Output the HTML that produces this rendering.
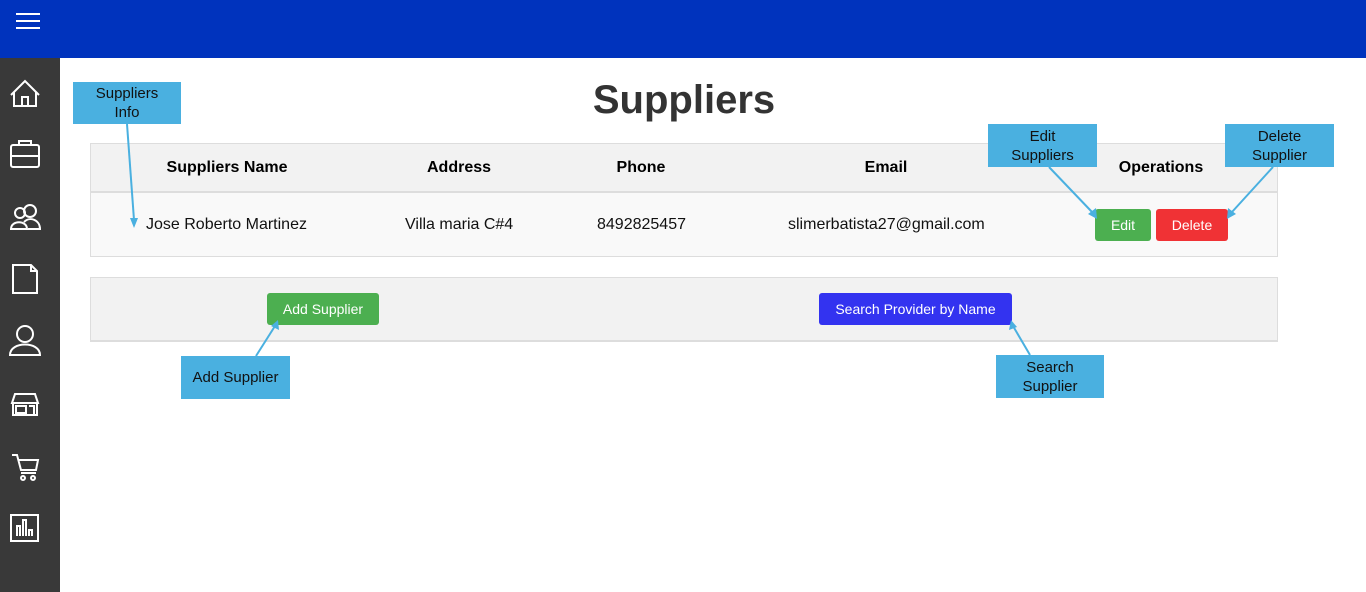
<!DOCTYPE html>
<html><head><meta charset="utf-8"><style>
*{margin:0;padding:0;box-sizing:border-box}
body{width:1366px;height:592px;position:relative;overflow:hidden;background:#fff;font-family:"Liberation Sans",Arial,sans-serif}
.a{position:absolute}
.top{left:0;top:0;width:1366px;height:58px;background:#0033bd}
.side{left:0;top:58px;width:60px;height:534px;background:#393939}
.th{font-weight:bold;font-size:16px;color:#000;text-align:center;transform:translateX(-50%);top:159px}
.td{font-size:16px;color:#111;top:216px}
.btn{color:#fff;font-size:14px;display:flex;align-items:center;justify-content:center;border-radius:3px}
.call{background:#4ab0e0;color:#111;font-size:15px;text-align:center;display:flex;align-items:center;justify-content:center;line-height:19px}
</style></head><body>
<div class="a top"></div>
<svg class="a" style="left:14px;top:11px" width="28" height="20"><g stroke="#fff" stroke-width="2"><line x1="2" y1="3" x2="26" y2="3"/><line x1="2" y1="10" x2="26" y2="10"/><line x1="2" y1="17" x2="26" y2="17"/></g></svg>
<div class="a side"></div>
<svg class="a" style="left:0;top:58px" width="60" height="534" fill="none" stroke="#fff" stroke-width="2">
<path d="M11 37 L25 23 L39 37 M14 34 V48 H36 V34 M22 48 V39 H28 V48"/>
<rect x="11" y="87" width="28" height="22" rx="2"/><path d="M19 87 V83 H31 V87 M11 98 H39"/>
<circle cx="20" cy="155" r="5"/><circle cx="30" cy="153" r="6"/><path d="M11 171 C11 162 27 162 27 171 Z M24 164 C30 158 40 162 40 171 H28"/>
<path d="M13 207 H31 L37 213 V235 H13 Z M31 207 V213 H37"/>
<circle cx="25" cy="276" r="8"/><path d="M10 297 C10 283 40 283 40 297 Z"/>
<path d="M12 345 L15 336 H35 L38 345 Z M13 345 V357 H37 V345 M16 348 H26 V355 H16 Z M29 348 H34 V357"/>
<path d="M12 397 H17 L21 412 H36 L38 402 H18 M21 415 H36"/><circle cx="23" cy="420" r="2"/><circle cx="33" cy="420" r="2"/>
<rect x="11" y="457" width="27" height="26"/><path d="M17 478 V468 H20 V478 M23 478 V462 H26 V478 M29 478 V472 H32 V478"/>
</svg>
<div class="a" style="left:0;width:1366px;top:78px;text-align:center;padding-left:2px;font-weight:bold;font-size:40px;color:#333">Suppliers</div>
<div class="a" style="left:90px;top:143px;width:1188px;height:50px;background:#f2f2f2;border:1px solid #ddd;border-bottom:2px solid #ddd"></div>
<div class="a" style="left:90px;top:193px;width:1188px;height:64px;background:#f9f9f9;border:1px solid #ddd;border-top:none"></div>
<div class="a th" style="left:227px">Suppliers Name</div>
<div class="a th" style="left:459px">Address</div>
<div class="a th" style="left:641px">Phone</div>
<div class="a th" style="left:886px">Email</div>
<div class="a th" style="left:1161px">Operations</div>
<div class="a td" style="left:146px">Jose Roberto Martinez</div>
<div class="a td" style="left:405px">Villa maria C#4</div>
<div class="a td" style="left:597px">8492825457</div>
<div class="a td" style="left:788px">slimerbatista27@gmail.com</div>
<div class="a btn" style="left:1095px;top:209px;width:56px;height:32px;background:#4caf50">Edit</div>
<div class="a btn" style="left:1156px;top:209px;width:72px;height:32px;background:#f03235">Delete</div>
<div class="a" style="left:90px;top:277px;width:1188px;height:65px;background:#f2f2f2;border:1px solid #ddd;border-bottom:2px solid #ddd"></div>
<div class="a btn" style="left:267px;top:293px;width:112px;height:32px;background:#4caf50">Add Supplier</div>
<div class="a btn" style="left:819px;top:293px;width:193px;height:32px;background:#3333f0">Search Provider by Name</div>
<div class="a call" style="left:73px;top:82px;width:108px;height:42px">Suppliers<br>Info</div>
<div class="a call" style="left:988px;top:124px;width:109px;height:43px">Edit<br>Suppliers</div>
<div class="a call" style="left:1225px;top:124px;width:109px;height:43px">Delete<br>Supplier</div>
<div class="a call" style="left:181px;top:356px;width:109px;height:43px">Add Supplier</div>
<div class="a call" style="left:996px;top:355px;width:108px;height:43px">Search<br>Supplier</div>
<svg class="a" style="left:0;top:0" width="1366" height="592" stroke="#4ab0e0" stroke-width="2" fill="#4ab0e0">
<line x1="127" y1="124" x2="134" y2="220"/><path d="M130 218 L138 218 L134 228 Z" stroke="none"/>
<line x1="1049" y1="167" x2="1092" y2="212"/><path d="M1088 214 L1096 208 L1097 219 Z" stroke="none"/>
<line x1="1273" y1="167" x2="1232" y2="212"/><path d="M1228 208 L1236 214 L1227 219 Z" stroke="none"/>
<line x1="256" y1="356" x2="275" y2="326"/><path d="M271 326 L279 330 L278 320 Z" stroke="none"/>
<line x1="1030" y1="355" x2="1013" y2="326"/><path d="M1009 330 L1017 327 L1011 320 Z" stroke="none"/>
</svg>
</body></html>
